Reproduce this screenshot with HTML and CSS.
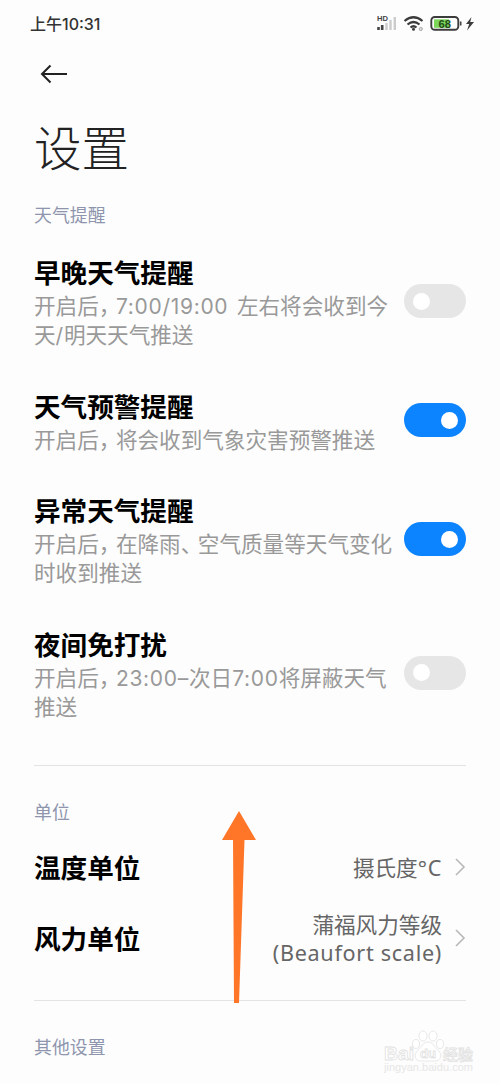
FILE: index.html
```html
<!DOCTYPE html>
<html lang="zh-CN">
<head>
<meta charset="utf-8">
<title>设置</title>
<link rel="stylesheet" href="styles.css">
</head>
<body>
<main class="screen">
  <header class="status">
    <span class="time">上午<span class="clock">10:31</span></span>
    <svg class="status-icons" width="100" height="20" viewBox="0 0 100 20">
      <text class="hd" x="1" y="8" textLength="11" lengthAdjust="spacingAndGlyphs">HD</text>
      <path d="M2.500 17v-3M6.200 17v-5" stroke="#444" stroke-width="2.600"/>
      <path d="M10.500 17v-7M14.500 17v-10M18.800 17V4" stroke="#ccc" stroke-width="2.400"/>
      <g fill="none" stroke="#3c3c3c" stroke-width="2.200">
        <path d="M28.500 8q9-7.500 18 0M31.500 11.500q6-5 12 0M34.500 14.500q3-2.500 6 0"/>
        <rect x="55.300" y="4" width="27" height="12.800" rx="3.500" stroke-width="1.900"/>
      </g>
      <circle cx="37.500" cy="16.300" r="1.500" fill="#3c3c3c"/>
      <circle cx="44.800" cy="16" r="1.600" fill="#ddd" stroke="#aaa" stroke-width="1"/>
      <path d="M58 6.300h15v8.500H58z" fill="#7bd65a"/>
      <path d="M84.700 8.500v4" stroke="#444" stroke-width="1.600"/>
      <text class="charge" x="62.500" y="14.500" textLength="12.500" lengthAdjust="spacingAndGlyphs">68</text>
      <path d="M95.500 4l-5.500 7h3.200l-2.200 6.500 7-8.500h-3.800z" fill="#3c3c3c"/>
    </svg>
  </header>
  <nav class="nav">
    <svg width="30" height="22" viewBox="0 0 30 22" fill="none" stroke="#222" stroke-width="2">
      <path d="M28 11H3M11.500 2.500L3 11l8.500 8.500"/>
    </svg>
  </nav>
  <h1 class="heading">设置</h1>
  <h2 class="label">天气提醒</h2>
  <section class="alerts">
    <div class="row">
      <div class="copy"><h3 class="name">早晚天气提醒</h3>
        <p class="desc">开启后<span class="comma">，</span><span class="latin">7:00/19:00 </span>左右将会收到今<br>天<span class="latin">/</span>明天天气推送</p></div>
      <span class="toggle"></span>
    </div>
    <div class="row">
      <div class="copy"><h3 class="name">天气预警提醒</h3>
        <p class="desc">开启后<span class="comma">，</span>将会收到气象灾害预警推送</p></div>
      <span class="toggle on"></span>
    </div>
    <div class="row">
      <div class="copy"><h3 class="name">异常天气提醒</h3>
        <p class="desc">开启后<span class="comma">，</span>在降雨<span class="comma">、</span>空气质量等天气变化<br>时收到推送</p></div>
      <span class="toggle on"></span>
    </div>
    <div class="row">
      <div class="copy"><h3 class="name">夜间免打扰</h3>
        <p class="desc">开启后<span class="comma">，</span><span class="latin">23:00–</span>次日<span class="latin">7:00</span>将屏蔽天气<br>推送</p></div>
      <span class="toggle"></span>
    </div>
  </section>
  <hr class="divider">
  <h2 class="label units">单位</h2>
  <section class="unit-list">
    <div class="unit">
      <h3 class="name">温度单位</h3>
      <p class="value">摄氏度<span class="degree">°C</span></p>
      <svg class="chevron" width="12" height="20" viewBox="0 0 12 20"><path d="M2 2l8 8-8 8"/></svg>
    </div>
    <div class="unit">
      <h3 class="name">风力单位</h3>
      <p class="value">蒲福风力等级<br><span class="scale">(Beaufort scale)</span></p>
      <svg class="chevron" width="12" height="20" viewBox="0 0 12 20"><path d="M2 2l8 8-8 8"/></svg>
    </div>
  </section>
  <hr class="divider">
  <h2 class="label other">其他设置</h2>

  <svg class="swipe" width="34" height="193" viewBox="0 0 34 193">
    <path d="M17 0l17 29H22.500L17 192h-5L11 29H0z" fill="#ff7629"/>
  </svg>
  <svg class="watermark" width="96" height="48" viewBox="0 0 96 48">
    <g fill="#fff" stroke="#e2e2e2" stroke-width=".8">
      <ellipse cx="39" cy="7" rx="4" ry="5"/><ellipse cx="49" cy="7" rx="4" ry="5"/>
      <ellipse cx="32" cy="15" rx="3.500" ry="4.500"/><ellipse cx="56" cy="15" rx="3.500" ry="4.500"/>
      <path d="M44 13c-5 0-6 5-10 8-5 5-3 11 3 11h14c6 0 8-6 3-11-4-3-5-8-10-8z"/>
      <text class="brand" x="0" y="31" textLength="30" lengthAdjust="spacingAndGlyphs">Bai</text>
      <text class="du" x="36" y="29" textLength="16" lengthAdjust="spacingAndGlyphs">du</text>
      <text class="brand cn" x="59" y="31" textLength="30">经验</text>
    </g>
    <text class="site" x="0" y="42" textLength="89">jingyan.baidu.com</text>
  </svg>
</main>
</body>
</html>
```
FILE: styles.css
```css
* { box-sizing: border-box; margin: 0; padding: 0; }
body { background: #fdfdfd; font-family: "Noto Sans CJK SC", sans-serif; }
.screen { position: relative; width: 500px; height: 1084px; padding: 0 34px; overflow: hidden; white-space: nowrap; }
.status { display: flex; justify-content: space-between; align-items: center; height: 46px; margin: 0 -10px 0 -4px; }
.time { font-size: 16px; font-weight: 500; color: #333; line-height: 24px; }
.clock { font-family: Inter, sans-serif; font-size: 16px; letter-spacing: 0; }
.status-icons { display: block; }
.hd { font: 700 7.500px "Liberation Sans", sans-serif; fill: #444; }
.charge { font: 700 11px "Liberation Sans", sans-serif; fill: #234d1b; }
.nav { height: 54px; padding: 17px 0 0 5px; }
.nav svg { display: block; }
.heading { height: 92px; line-height: 92px; font-size: 47.500px; font-weight: 300; color: #222; }
.label { height: 26px; margin-top: 9px; line-height: 26px; font-size: 17.900px; font-weight: 400; color: #8e95ad; }
.alerts { display: flex; flex-direction: column; gap: 39.500px; padding: 27px 0 0; }
.row { display: flex; justify-content: space-between; align-items: center; }
.copy { width: 360px; }
.name { height: 36px; line-height: 36px; font-size: 26.600px; font-weight: 700; color: #000; }
.desc { font-size: 21.600px; line-height: 29px; color: #999; }
.comma { letter-spacing: -4.500px; }
.latin { font-family: Inter, sans-serif; font-size: 21px; line-height: 1; letter-spacing: .7px; word-spacing: 2px; }
.toggle { flex: none; width: 62px; height: 34px; padding: 8.500px; border-radius: 17px; background: #e6e6e6; }
.toggle::before { content: ""; display: block; width: 17px; height: 17px; border-radius: 50%; background: #fff; }
.toggle.on { background: #0d84ff; }
.toggle.on::before { margin-left: auto; }
.divider { height: 1px; border: 0; background: #e4e4e4; margin-top: 45px; }
.units { margin-top: 32px; }
.unit-list { padding-top: 8px; }
.unit { display: flex; align-items: center; height: 71px; }
.value { flex: 1; text-align: right; padding-right: 12px; font-size: 21.600px; line-height: 28.500px; color: #666; }
.degree, .scale { font-family: "Noto Sans", sans-serif; letter-spacing: .7px; line-height: 1; }
.chevron { flex: none; fill: none; stroke: #b8b8b8; stroke-width: 1.600; }
.unit + .unit { margin-bottom: -19px; }
.other { margin-top: 32px; }
.swipe { position: absolute; left: 222px; top: 811px; }
.watermark { position: absolute; left: 384px; top: 1029px; }
.brand { font: 700 19px "Liberation Sans", sans-serif; }
.brand.cn { font: 500 15px "Noto Sans CJK SC", sans-serif; }
.du { font: 700 12px "Liberation Sans", sans-serif; }
.site { font: 11px "Liberation Sans", sans-serif; fill: #e6e6e6; }
```
